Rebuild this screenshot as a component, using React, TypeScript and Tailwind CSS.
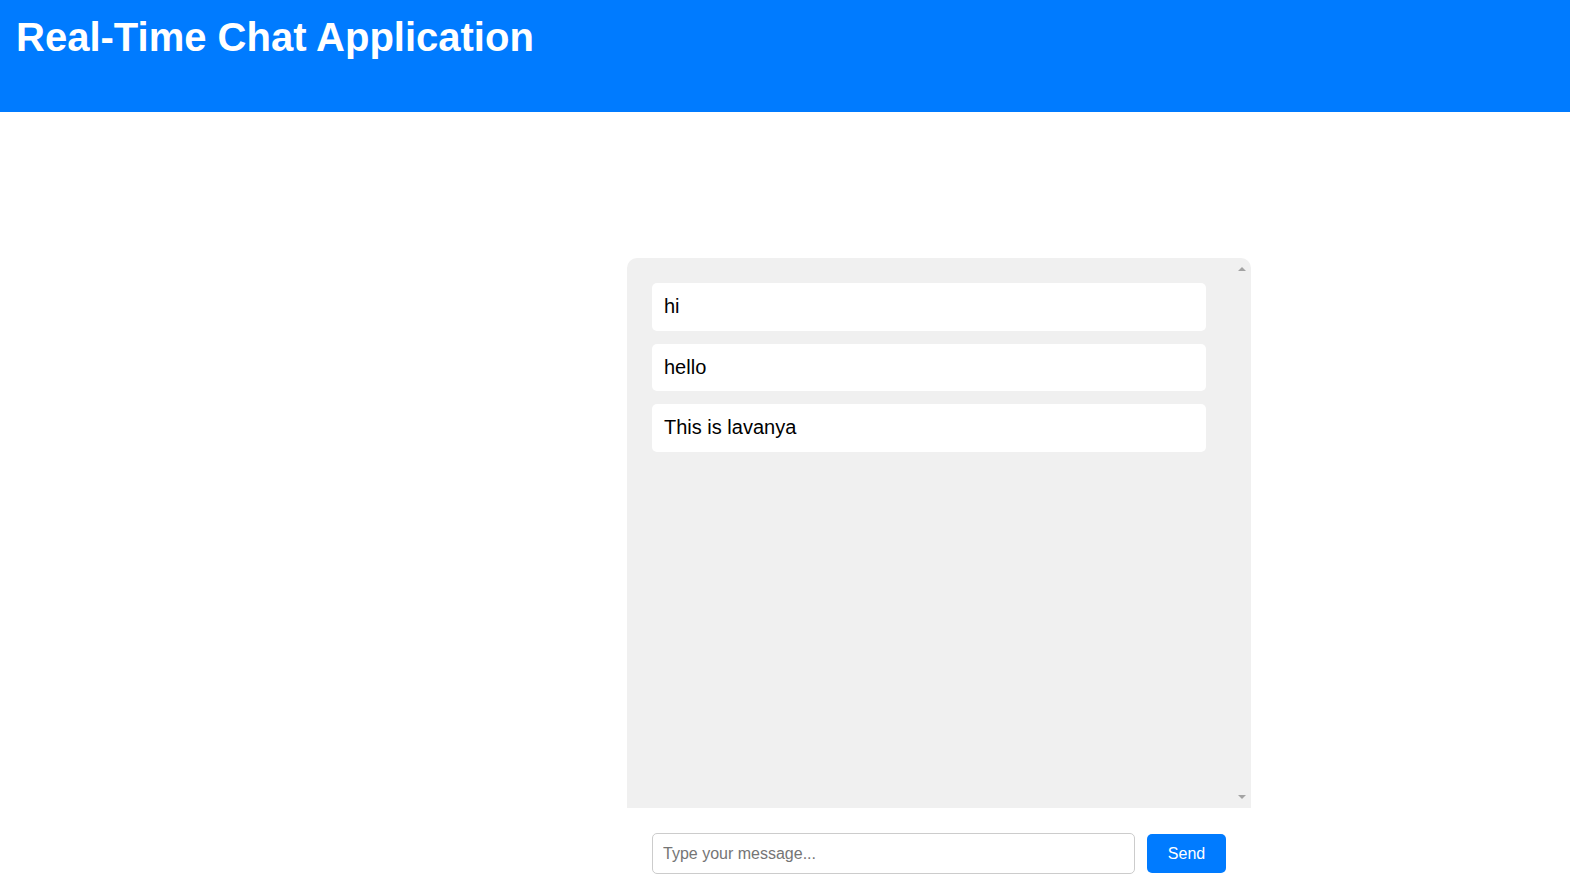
import { useState } from 'react';

type Message = {
  id: number;
  text: string;
};

export default function App() {
  const [messages, setMessages] = useState<Message[]>([
    { id: 1, text: 'hi' },
    { id: 2, text: 'hello' },
    { id: 3, text: 'This is lavanya' },
  ]);
  const [draft, setDraft] = useState('');

  const send = () => {
    if (!draft.trim()) return;
    setMessages([...messages, { id: Date.now(), text: draft }]);
    setDraft('');
  };

  return (
    <div className="min-h-screen bg-white font-['Liberation_Sans',Arial,sans-serif] text-black">
      <header className="h-[112px] bg-[#007bff] pl-[16px] pt-[14px]">
        <h1 className="text-[40px] font-bold leading-[46px] text-white">Real-Time Chat Application</h1>
      </header>

      <main className="ml-[627px] mt-[146px] w-[624px]">
        <div className="flex h-[550px] rounded-t-[10px] bg-[#f0f0f0]">
          <div className="flex flex-1 flex-col gap-[13px] overflow-y-auto pb-[25px] pl-[25px] pr-[28px] pt-[25px]">
            {messages.map((m) => (
              <div key={m.id} className="rounded-[5px] bg-white px-[12px] py-[12px] text-[20px] leading-[23.5px]">
                {m.text}
              </div>
            ))}
          </div>
          {/* scrollbar arrows */}
          <div className="flex w-[17px] flex-col items-center justify-between py-[9px] pr-[2px]">
            <span className="h-0 w-0 border-x-[4.5px] border-b-[4.5px] border-x-transparent border-b-[#a3a3a3]" />
            <span className="h-0 w-0 border-x-[4.5px] border-t-[4.5px] border-x-transparent border-t-[#a3a3a3]" />
          </div>
        </div>

        <div className="flex items-center gap-[12px] pl-[25px] pr-[25px] py-[25px]">
          <input
            value={draft}
            onChange={(e) => setDraft(e.target.value)}
            onKeyDown={(e) => e.key === 'Enter' && send()}
            placeholder="Type your message..."
            className="h-[41px] flex-1 rounded-[5px] border border-[#ccc] px-[10px] text-[16px] outline-none placeholder:text-[#757575]"
          />
          <button
            onClick={send}
            className="h-[39px] w-[79px] rounded-[5px] bg-[#007bff] text-[16px] text-white"
          >
            Send
          </button>
        </div>
      </main>
    </div>
  );
}
